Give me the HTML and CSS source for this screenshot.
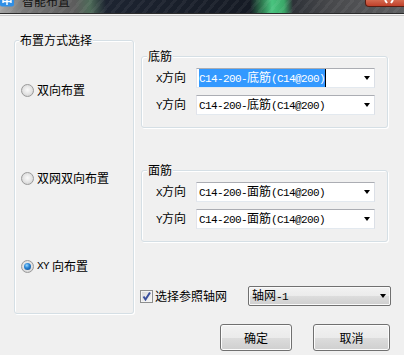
FILE: index.html
```html
<!DOCTYPE html>
<html lang="zh-CN">
<head>
    <meta charset="UTF-8">
    <title>智能布置</title>
    <link rel="stylesheet" href="styles.css">
</head>
<body>
    <div class="title-bar">
        <div class="app-icon">
            <svg width="15" height="7" viewBox="0 0 15 7">
                <rect x="0" y="-4" width="14" height="10.5" rx="2" fill="#2f8fe6"/>
                <path d="M3 1.5 H11 M7 -1 V5 M3 -1 V3 M11 -1 V3" stroke="#fff" stroke-width="1.4" fill="none"/>
            </svg>
        </div>
        <span class="title-text">智能布置</span>
        <div class="close-btn">
            <svg width="10" height="5" viewBox="0 0 10 5">
                <path d="M1 0 L3 3 M9 0 L7 3" stroke="#fff" stroke-width="2" fill="none"/>
            </svg>
        </div>
    </div>

    <div class="dialog-body">
        <!-- 布置方式 -->
        <fieldset class="group mode-group">
            <legend>布置方式选择</legend>
            <label class="radio-row"><span class="radio"></span>双向布置</label>
            <label class="radio-row"><span class="radio"></span>双网双向布置</label>
            <label class="radio-row"><span class="radio checked"></span><span class="lat">XY</span>向布置</label>
        </fieldset>

        <div class="right-col">
            <fieldset class="group bar-group">
                <legend>底筋</legend>
                <div class="field-row">
                    <span class="field-label"><span class="lat">X</span>方向</span>
                    <div class="combo">
                        <span class="combo-text selected"><span class="lat">C14-200-</span>底筋<span class="lat">(C14@200)</span></span>
                        <span class="arrow"></span>
                    </div>
                </div>
                <div class="field-row">
                    <span class="field-label"><span class="lat">Y</span>方向</span>
                    <div class="combo">
                        <span class="combo-text"><span class="lat">C14-200-</span>底筋<span class="lat">(C14@200)</span></span>
                        <span class="arrow"></span>
                    </div>
                </div>
            </fieldset>

            <fieldset class="group bar-group top-bar">
                <legend>面筋</legend>
                <div class="field-row">
                    <span class="field-label"><span class="lat">X</span>方向</span>
                    <div class="combo">
                        <span class="combo-text"><span class="lat">C14-200-</span>面筋<span class="lat">(C14@200)</span></span>
                        <span class="arrow"></span>
                    </div>
                </div>
                <div class="field-row">
                    <span class="field-label"><span class="lat">Y</span>方向</span>
                    <div class="combo">
                        <span class="combo-text"><span class="lat">C14-200-</span>面筋<span class="lat">(C14@200)</span></span>
                        <span class="arrow"></span>
                    </div>
                </div>
            </fieldset>

            <div class="axis-row">
                <label class="check-label">
                    <span class="checkbox">
                        <svg width="11" height="11" viewBox="0 0 11 11">
                            <path d="M2.5 5.5 L4.5 8.5 L9 1.5" stroke="#3a4f9c" stroke-width="2" fill="none"/>
                        </svg>
                    </span>
                    选择参照轴网
                </label>
                <div class="dropdown">
                    <span>轴网<span class="lat">-1</span></span>
                    <span class="arrow"></span>
                </div>
            </div>

            <div class="button-row">
                <button class="btn ok-btn">确定</button>
                <button class="btn cancel-btn">取消</button>
            </div>
        </div>
    </div>
</body>
</html>
```

FILE: styles.css
```css
* {
    margin: 0;
    padding: 0;
    box-sizing: border-box;
}

body {
    width: 404px;
    height: 355px;
    overflow: hidden;
    background: #f0f0f0;
    font-family: "Noto Sans CJK SC", sans-serif;
    font-size: 12px;
    line-height: 14px;
    color: #000;
}

.lat {
    font-family: "Liberation Mono", monospace;
    font-size: 11px;
    letter-spacing: -0.6px;
}

/* 标题栏 (上半部分被裁掉) */
.title-bar {
    height: 16px;
    display: flex;
    align-items: flex-start;
    overflow: hidden;
    background:
        linear-gradient(to bottom, transparent 13px, #2b2b2b 13px, #2b2b2b 14px, #f6f6f6 14px, #f6f6f6 15px, #c9c9c9 15px),
        repeating-linear-gradient(-50deg, rgba(255, 255, 255, 0.05) 0 3px, transparent 3px 8px),
        linear-gradient(to right, #a5a5a5 0, #7a7a7a 22px, #5c5c5c 75px, #4d6a58 90px, #1d2431 106px, #151a24 250px, #2f7a50 262px, #49c47f 272px, #3aa868 284px, #2e3238 293px, #47484b 330px, #5e5f61 404px);
}

.app-icon {
    width: 15px;
    height: 7px;
    display: flex;
}

.title-text {
    margin-left: 7px;
    margin-top: -5px;
    line-height: 12px;
    color: #111;
}

.close-btn {
    margin-left: auto;
    margin-right: -6px;
    width: 45px;
    height: 7px;
    border: 1px solid #5a1d12;
    border-top: none;
    border-radius: 0 0 4px 4px;
    background: linear-gradient(to bottom, #d46a50, #c0402a);
    display: flex;
    justify-content: center;
    padding-left: 2px;
}

/* 主体 */
.dialog-body {
    display: flex;
    align-items: flex-start;
    gap: 7px;
    padding: 17px 0 0 14px;
}

.group {
    border: 1px solid #d5dfe5;
    border-radius: 3px;
    box-shadow: inset 1px 1px 0 #fff, 1px 1px 0 #fff;
}

.group legend {
    line-height: 14px;
    padding: 0 1px;
    background: #f0f0f0;
}

.mode-group {
    width: 120px;
    padding: 36px 0 40px 6px;
    display: flex;
    flex-direction: column;
    gap: 74px;
}

.mode-group legend {
    margin-left: -2px;
}

.radio-row {
    display: flex;
    align-items: center;
    gap: 3px;
    height: 14px;
    white-space: nowrap;
}

.radio {
    width: 13px;
    height: 13px;
    border-radius: 50%;
    border: 1px solid #9a9a9a;
    background: radial-gradient(circle at 50% 45%, #fafafa 0, #e2e2e2 55%, #c6c6c6 100%);
    display: flex;
    align-items: center;
    justify-content: center;
}

.radio.checked::after {
    content: "";
    width: 7px;
    height: 7px;
    border-radius: 50%;
    background: radial-gradient(circle at 40% 35%, #9ad8ff 0, #2a86d6 40%, #0d3f82 100%);
}

.right-col {
    width: 250px;
    display: flex;
    flex-direction: column;
}

.bar-group {
    width: 247px;
    margin-top: 16px;
    padding: 5px 11px 12px 14px;
    display: flex;
    flex-direction: column;
    gap: 7px;
}

.bar-group legend {
    margin-left: -9px;
}

.top-bar {
    margin-top: 35px;
}

.field-row {
    display: flex;
    align-items: center;
}

.field-label {
    width: 40px;
    white-space: nowrap;
}

.combo {
    width: 179px;
    height: 20px;
    border: 1px solid;
    border-color: #abadb3 #dbdfe6 #e3e9ef #e2e3ea;
    background: #fff;
    display: flex;
    align-items: center;
    padding-left: 2px;
    white-space: nowrap;
}

.combo-text.selected {
    background: #3399ff;
    color: #fff;
    border-right: 1px solid #000;
    line-height: 15px;
}

.arrow {
    margin-left: auto;
    margin-right: 4px;
    width: 0;
    height: 0;
    border-top: 4px solid #000;
    border-left: 3.5px solid transparent;
    border-right: 3.5px solid transparent;
}

.axis-row {
    margin-top: 44px;
    height: 20px;
    display: flex;
    align-items: center;
}

.check-label {
    display: flex;
    align-items: center;
    gap: 2px;
    margin-left: -1px;
    white-space: nowrap;
}

.checkbox {
    width: 13px;
    height: 13px;
    border: 1px solid #8e8f8f;
    background: linear-gradient(135deg, #d8d8d8, #f8f8f8);
    box-shadow: inset 0 0 0 1px #f4f4f4;
    display: flex;
    align-items: center;
    justify-content: center;
}

.dropdown {
    margin-left: auto;
    width: 143px;
    height: 20px;
    border: 1px solid #707070;
    border-radius: 2px;
    background: linear-gradient(to bottom, #f2f2f2 0, #ebebeb 50%, #dddddd 50%, #cfcfcf 100%);
    box-shadow: inset 0 0 0 1px #fafafa;
    display: flex;
    align-items: center;
    padding-left: 3px;
}

.button-row {
    margin-top: 18px;
    display: flex;
    justify-content: flex-end;
    gap: 21px;
    padding-right: 1px;
}

.btn {
    height: 27px;
    border: 1px solid #707070;
    border-radius: 3px;
    background: linear-gradient(to bottom, #f2f2f2 0, #ebebeb 50%, #dddddd 50%, #cfcfcf 100%);
    box-shadow: inset 0 0 0 1px #fcfcfc;
    font-family: "Noto Sans CJK SC", sans-serif;
    font-size: 12px;
    color: #000;
}

.ok-btn {
    width: 72px;
}

.cancel-btn {
    width: 77px;
}
```
